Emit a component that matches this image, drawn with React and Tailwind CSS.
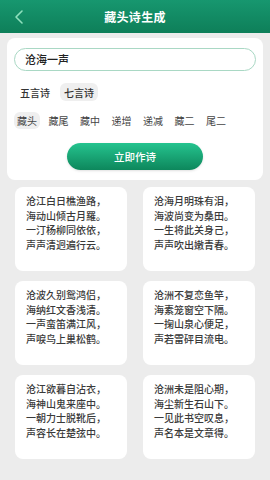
import React, { useState } from 'react';

const poems = [
  ['沧江白日樵渔路，', '海动山倾古月羅。', '一汀杨柳同依依，', '声声清迥遍行云。'],
  ['沧海月明珠有泪，', '海波尚变为桑田。', '一生将此关身己，', '声声吹出嫩青春。'],
  ['沧波久别鸳鸿侣，', '海纳红文香浅清。', '一声蛮笛满江风，', '声唳鸟上巢松鹤。'],
  ['沧洲不复恋鱼竿，', '海素笼窗空下隔。', '一掬山泉心便足，', '声若雷砰目流电。'],
  ['沧江欲暮自沾衣，', '海神山鬼来座中。', '一朝力士脱靴后，', '声容长在楚弦中。'],
  ['沧洲未是阻心期，', '海尘新生石山下。', '一见此书空叹息，', '声名本是文章得。'],
];

const modes = ['藏头', '藏尾', '藏中', '递增', '递减', '藏二', '尾二'];

const App = () => {
  const [len, setLen] = useState('七言诗');
  const [mode, setMode] = useState('藏头');

  return (
    <div
      className="w-[270px] h-[480px] overflow-hidden bg-[#ececec] text-[#333]"
      style={{ fontFamily: '"Noto Sans CJK SC", "Noto Sans", sans-serif' }}
    >
      <header className="h-[33px] bg-gradient-to-b from-[#17976f] to-[#0e7f59] flex items-center relative">
        <svg className="absolute left-[13px] top-[9px]" width="12" height="16" viewBox="0 0 12 16">
          <path d="M9 2 L3 8 L9 14" fill="none" stroke="#8fe0bd" strokeWidth="1.6" strokeLinecap="round" strokeLinejoin="round" />
        </svg>
        <h1 className="flex-1 text-center text-white text-[12px] font-bold tracking-wide">藏头诗生成</h1>
      </header>

      <div className="mx-[7px] mt-[5px] bg-white rounded-lg px-[7px] pt-[10px] pb-[10px]">
        <div className="h-[23px] rounded-full border border-[#a9d8c4] flex items-center px-[10px] text-[11px] font-medium text-[#222]">
          沧海一声
        </div>
        <div className="flex items-center gap-[6px] mt-[12px] pl-[2px]">
          {['五言诗', '七言诗'].map(l => (
            <span
              key={l}
              onClick={() => setLen(l)}
              className={`px-[4px] h-[18px] flex items-center rounded-md text-[10px] font-medium ${len === l ? 'bg-[#efefef]' : ''}`}
            >
              {l}
            </span>
          ))}
        </div>
        <div className="flex items-center gap-[5.5px] mt-[11px]">
          {modes.map(m => (
            <span
              key={m}
              onClick={() => setMode(m)}
              className={`px-[3px] h-[17px] flex items-center rounded-md text-[10px] text-[#444] ${mode === m ? 'bg-[#efefef]' : ''}`}
            >
              {m}
            </span>
          ))}
        </div>
        <div className="flex justify-center mt-[14px]">
          <button className="w-[136px] h-[27px] rounded-full bg-gradient-to-b from-[#25c48f] to-[#0d875c] text-white text-[10.5px] font-medium shadow-sm">
            立即作诗
          </button>
        </div>
      </div>

      <div className="grid grid-cols-2 gap-x-[16px] gap-y-[10px] px-[15px] mt-[7px]">
        {poems.map((p, i) => (
          <div key={i} className="h-[84px] bg-white rounded-lg pl-[11px] pt-[7px]">
            {p.map((line, j) => (
              <p key={j} className="text-[10px] leading-[14.5px] font-medium text-[#3a3a3a] whitespace-nowrap">{line}</p>
            ))}
          </div>
        ))}
      </div>
    </div>
  );
};

export default App;
